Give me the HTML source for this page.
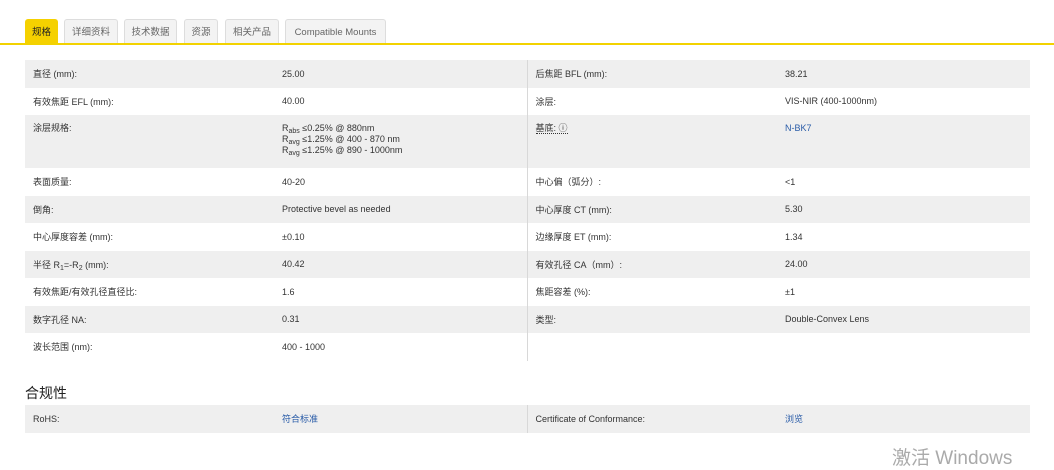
<!DOCTYPE html>
<html><head><meta charset="utf-8"><style>
body{margin:0;background:#fff;width:1054px;height:461px;overflow:hidden;position:relative;font-family:"Liberation Sans","Noto Sans CJK SC",sans-serif;color:#333;font-size:9px}
.tabs{position:absolute;top:19px;left:0;width:1054px;height:24px;border-bottom:2px solid #f2d200}
.tab{position:absolute;top:0;height:24px;line-height:25px;background:#f3f3f3;border:1px solid #ddd;border-bottom:none;border-radius:3px 3px 0 0;box-sizing:border-box;text-align:center;color:#666;font-size:9.5px}
.tab.a{background:#f5d100;border-color:#f5d100;color:#222}
table{position:absolute;left:25px;top:60px;border-collapse:collapse;table-layout:fixed;width:1005px}
td{padding:0 0 0 8px;height:27.5px;vertical-align:middle;white-space:nowrap;box-sizing:border-box}
tr.g td{background:#efefef}
td.r{border-left:1px solid #d8d8d8}
.tall td{height:53px;vertical-align:top;padding-top:8px;line-height:11px}
a{color:#2a5ca8;text-decoration:none}
sub{font-size:7px;vertical-align:-2px;line-height:0}
h3{position:absolute;left:25px;top:383px;margin:0;font-size:14px;font-weight:normal;color:#222}
.wm{position:absolute;left:892px;top:443px;font-size:19px;color:#aaa}
</style></head><body>
<div class="tabs">
<div class="tab a" style="left:25px;width:33px">规格</div>
<div class="tab" style="left:64px;width:54px">详细资料</div>
<div class="tab" style="left:124px;width:53px">技术数据</div>
<div class="tab" style="left:184px;width:34px">资源</div>
<div class="tab" style="left:225px;width:54px">相关产品</div>
<div class="tab" style="left:285px;width:101px">Compatible Mounts</div>
</div>
<table>
<colgroup><col style="width:249px"><col style="width:253px"><col style="width:250px"><col style="width:253px"></colgroup>
<tr class="g"><td>直径 (mm):</td><td>25.00</td><td class="r">后焦距 BFL (mm):</td><td>38.21</td></tr>
<tr><td>有效焦距 EFL (mm):</td><td>40.00</td><td class="r">涂层:</td><td>VIS-NIR (400-1000nm)</td></tr>
<tr class="g tall"><td>涂层规格:</td><td>R<sub>abs</sub> ≤0.25% @ 880nm<br>R<sub>avg</sub> ≤1.25% @ 400 - 870 nm<br>R<sub>avg</sub> ≤1.25% @ 890 - 1000nm</td><td class="r"><span style="border-bottom:1px dotted #333">基底: ⓘ</span></td><td><a>N-BK7</a></td></tr>
<tr><td>表面质量:</td><td>40-20</td><td class="r">中心偏（弧分）:</td><td>&lt;1</td></tr>
<tr class="g"><td>倒角:</td><td>Protective bevel as needed</td><td class="r">中心厚度 CT (mm):</td><td>5.30</td></tr>
<tr><td>中心厚度容差 (mm):</td><td>±0.10</td><td class="r">边缘厚度 ET (mm):</td><td>1.34</td></tr>
<tr class="g"><td>半径 R<sub>1</sub>=-R<sub>2</sub> (mm):</td><td>40.42</td><td class="r">有效孔径 CA（mm）:</td><td>24.00</td></tr>
<tr><td>有效焦距/有效孔径直径比:</td><td>1.6</td><td class="r">焦距容差 (%):</td><td>±1</td></tr>
<tr class="g"><td>数字孔径 NA:</td><td>0.31</td><td class="r">类型:</td><td>Double-Convex Lens</td></tr>
<tr><td>波长范围 (nm):</td><td>400 - 1000</td><td class="r"></td><td></td></tr>
</table>
<h3>合规性</h3>
<table style="top:405px">
<colgroup><col style="width:249px"><col style="width:253px"><col style="width:250px"><col style="width:253px"></colgroup>
<tr class="g"><td>RoHS:</td><td><a>符合标准</a></td><td class="r">Certificate of Conformance:</td><td><a>浏览</a></td></tr>
</table>
<div class="wm">激活 Windows</div>
</body></html>
